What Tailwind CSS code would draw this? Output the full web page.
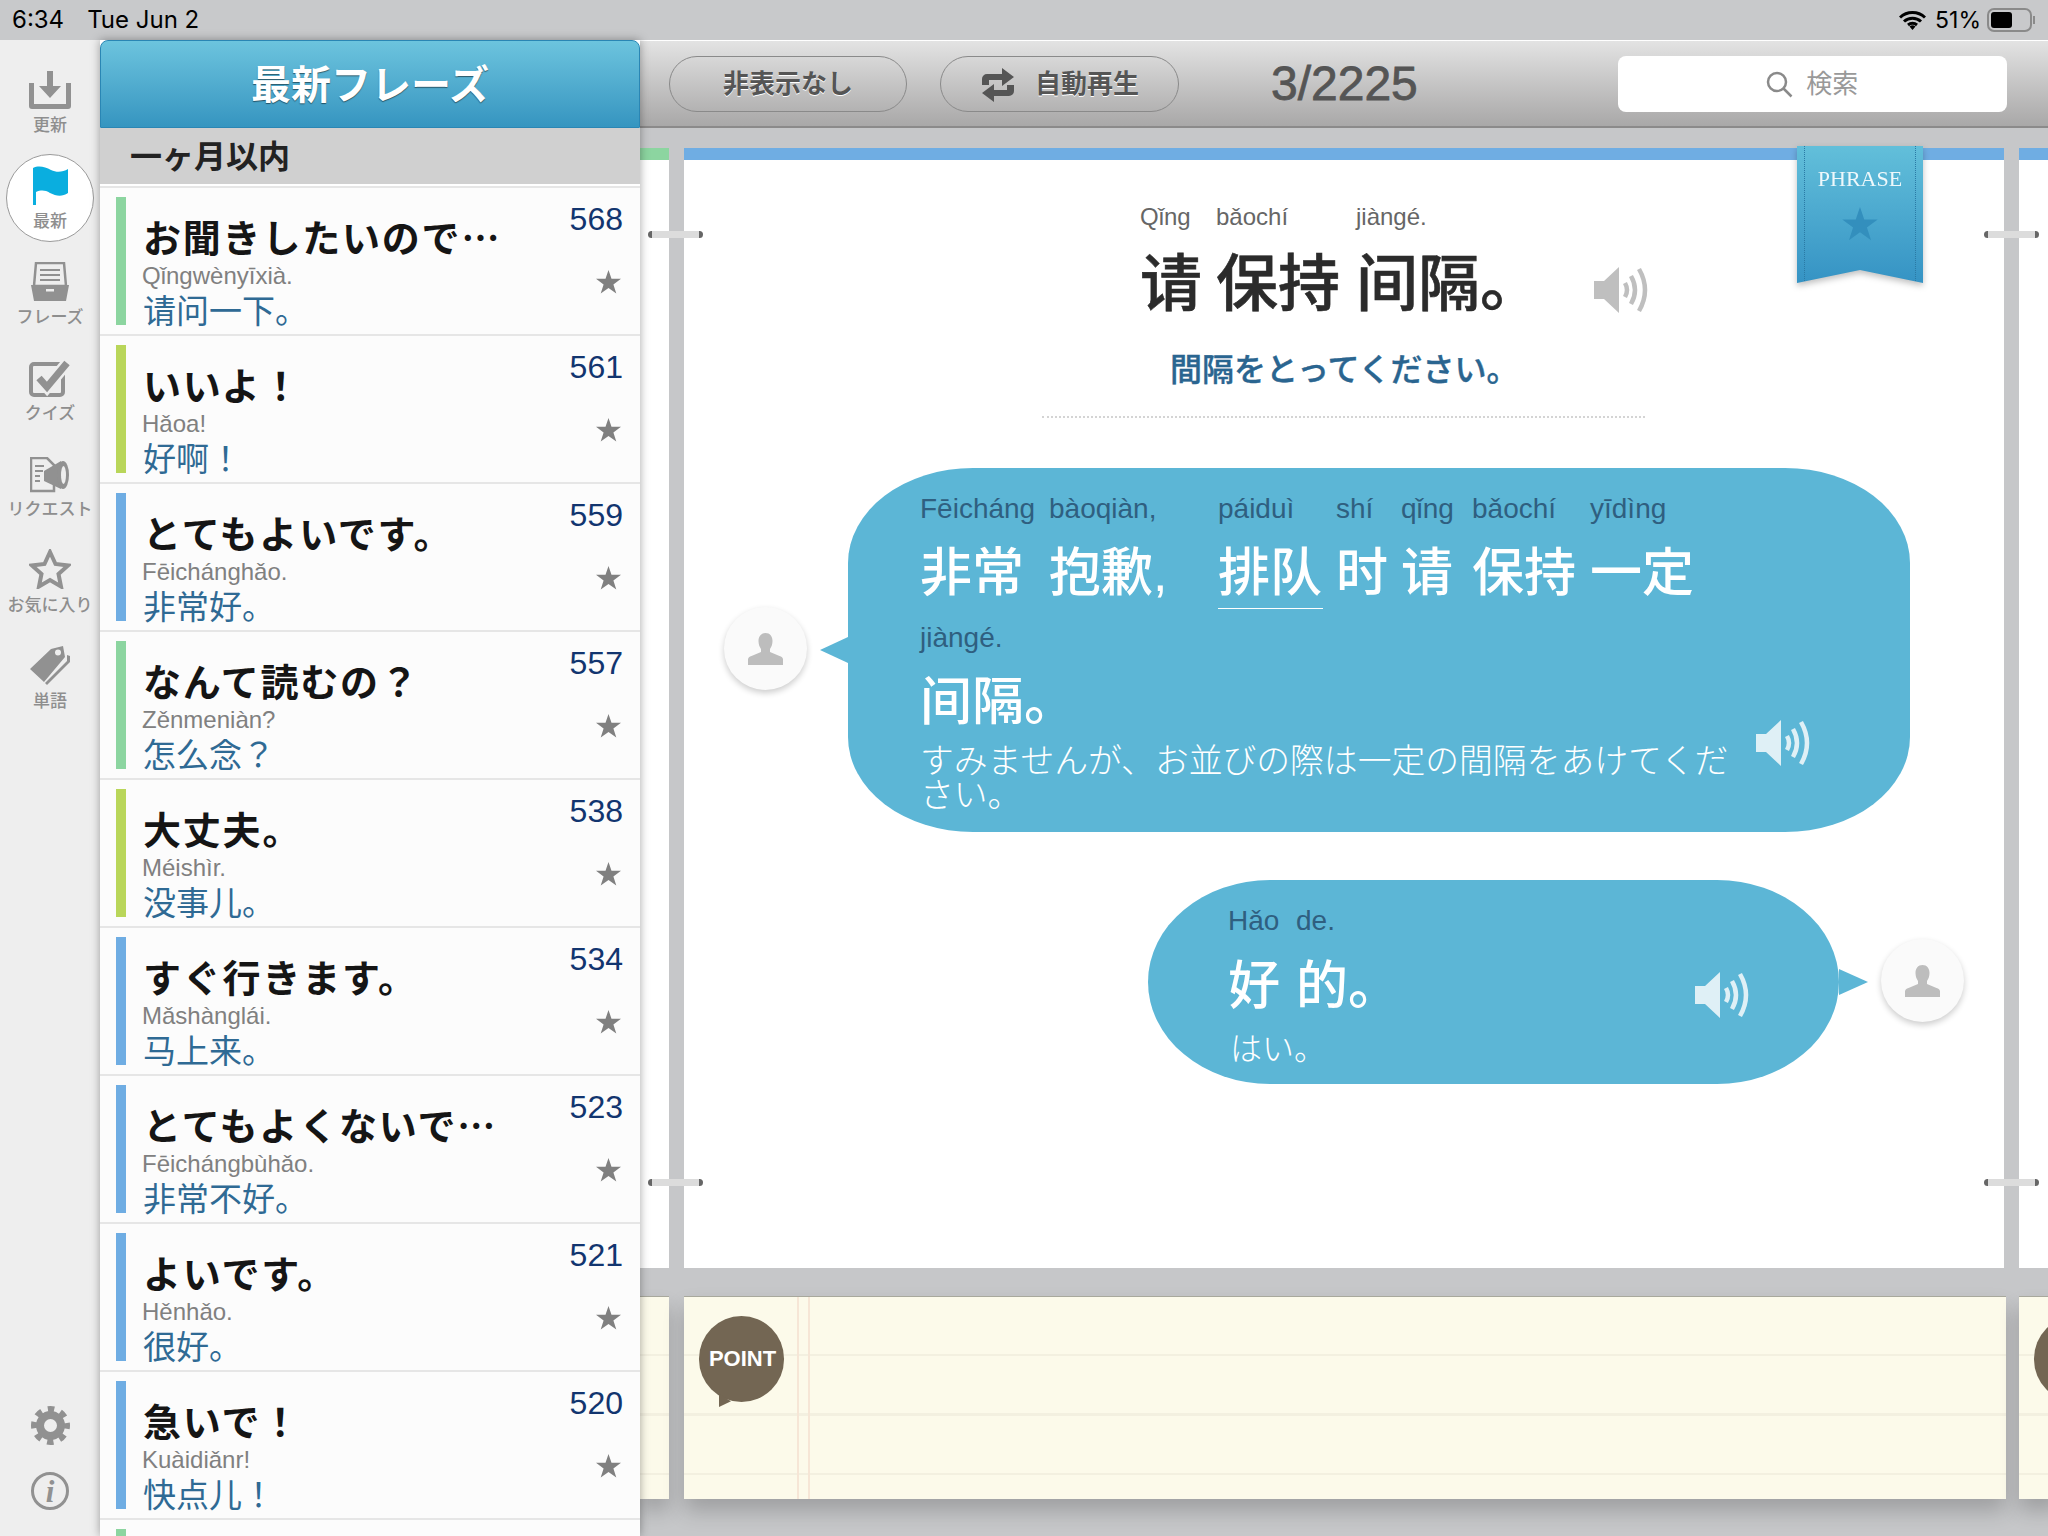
<!DOCTYPE html>
<html lang="ja">
  <head>
    <meta charset="UTF-8" />
    <title>最新フレーズ</title>
    <script src="https://cdn.jsdelivr.net/npm/@tailwindcss/browser@4"></script>
  </head>
  <body class="bg-[#c6c7c9] font-['Liberation_Sans','Noto_Sans_CJK_JP',sans-serif]">
    <svg class="hidden">
      <symbol id="speaker" viewBox="0 0 56 48">
        <path d="M0 15h10L25 1v46L10 33H0z" fill="currentColor" />
        <path d="M31 17q4 7 0 14M37 10q8 14 0 28M45 3q12 21 0 42" fill="none" stroke="currentColor" stroke-width="4.5" />
      </symbol>
      <symbol id="person" viewBox="0 0 35 32">
        <path d="M17.500 0c4.500 0 7 3.500 7 8 0 3-1 6-2.500 8v3l9.500 4c2 .8 3.500 1.600 3.500 3.500V32H0v-5.500C0 24.600 1.500 23.800 3.500 23l9.500-4v-3c-1.500-2-2.500-5-2.500-8 0-4.500 2.500-8 7-8z" fill="#bdbdbd" />
      </symbol>
      <symbol id="fav" viewBox="0 0 25 24">
        <path d="M12.500 0l3 8.800h9.500l-7.600 5.600 2.900 9.100-7.800-5.600-7.800 5.600 2.900-9.100L0 8.800h9.500z" fill="#808080" />
      </symbol>
    </svg>

    <div class="w-[2048px] h-[1536px] flex flex-col overflow-hidden">
      <!-- status bar -->
      <div class="h-[40px] bg-[#c8c9cb] flex items-center pl-[12px] pr-[13px] text-[24px] text-black font-['Inter','Liberation_Sans',sans-serif] shrink-0">
        <span>6:34</span>
        <span class="ml-[23px]">Tue Jun 2</span>
        <svg class="ml-auto w-[27px] h-[20px]" viewBox="0 0 27 20">
          <path d="M1 7.500a18 18 0 0 1 25 0M5 11.500a12.500 12.500 0 0 1 17 0M9 15a7 7 0 0 1 9 0" fill="none" stroke="black" stroke-width="3" />
          <path d="M10.500 16.500a4.500 4.500 0 0 1 6 0l-3 3.500z" />
        </svg>
        <span class="ml-[9px] text-[23px]">51%</span>
        <div class="ml-[6px] w-[45px] h-[24px] rounded-[7px] border-2 border-[#8a8a8a] p-[2px]">
          <div class="w-[21px] h-full bg-black rounded-[3px]"></div>
        </div>
        <div class="w-[2px] h-[8px] bg-[#8a8a8a] ml-[1px]"></div>
      </div>

      <div class="flex flex-1 min-h-0">
        <!-- side nav -->
        <nav class="w-[100px] shrink-0 bg-[#eeeeee] flex flex-col pt-[18px] pb-[26px] text-[#8e8e8e] text-[17px] font-medium leading-[20px] text-center">
          <div class="h-[96px] flex flex-col items-center">
            <div class="h-[58px] flex items-end pb-[7px]">
              <svg class="w-[42px] h-[38px]" viewBox="0 0 42 38" fill="#919191"><path d="M18 0h6v15h8L21 27 10 15h8z" /><path d="M0 12h5v21h32V12h5v23a3 3 0 0 1-3 3H3a3 3 0 0 1-3-3z" /></svg>
            </div>
            <span>更新</span>
          </div>
          <div class="h-[96px] flex flex-col items-center relative">
            <div class="absolute top-0 left-[6px] w-[88px] h-[88px] rounded-full bg-white border border-[#9a9a9a]"></div>
            <div class="h-[58px] flex items-end pb-[7px] relative">
              <svg class="w-[35px] h-[39px]" viewBox="0 0 35 39" fill="#0aaedf"><path d="M0 2c6-3 12-1 18 2s12 2 17-1v24c-6 4-12 3-18 0-5-3-9-3-14-1v13H0z" /></svg>
            </div>
            <span class="relative">最新</span>
          </div>
          <div class="h-[96px] flex flex-col items-center">
            <div class="h-[58px] flex items-end pb-[7px]">
              <svg class="w-[38px] h-[39px]" viewBox="0 0 38 39" fill="#919191"><path d="M5 1h28l2 23H3z" fill="none" stroke="#919191" stroke-width="2.500" /><path d="M9 7h20v2H9zM9 12h20v2H9zM9 17h20v2H9z" /><path d="M0 23h38l-3 16H3z" /><path d="M15 27h8v2.500h-8z" fill="#eeeeee" /></svg>
            </div>
            <span>フレーズ</span>
          </div>
          <div class="h-[96px] flex flex-col items-center">
            <div class="h-[58px] flex items-end pb-[7px]">
              <svg class="w-[42px] h-[37px]" viewBox="0 0 42 37" fill="none"><rect x="2" y="4" width="32" height="31" rx="3" stroke="#919191" stroke-width="4" /><path d="M10 18l8 9L38 3" stroke="#eeeeee" stroke-width="12" /><path d="M10 18l8 9L38 3" stroke="#919191" stroke-width="7" /></svg>
            </div>
            <span>クイズ</span>
          </div>
          <div class="h-[96px] flex flex-col items-center">
            <div class="h-[58px] flex items-end pb-[7px]">
              <svg class="w-[40px] h-[36px]" viewBox="0 0 40 36" fill="#919191"><path d="M1 1h16l7 7v26H1z" fill="none" stroke="#919191" stroke-width="2.500" /><path d="M5 8h9v2H5zM5 13h8v2H5zM5 18h5v2H5zM5 23h5v2H5z" /><path d="M14 14L31 4v28L14 24z" /><ellipse cx="33" cy="18" rx="6" ry="14" /><ellipse cx="33.500" cy="18" rx="2.500" ry="9" fill="#eeeeee" /></svg>
            </div>
            <span>リクエスト</span>
          </div>
          <div class="h-[96px] flex flex-col items-center">
            <div class="h-[58px] flex items-end pb-[7px]">
              <svg class="w-[42px] h-[40px]" viewBox="0 0 42 40"><path d="M21 3l5.500 12L39 16.500l-9.500 8.500L32 37.500l-11-6.500-11 6.500L12.500 25 3 16.500 15.500 15z" fill="none" stroke="#919191" stroke-width="4" /></svg>
            </div>
            <span>お気に入り</span>
          </div>
          <div class="h-[96px] flex flex-col items-center">
            <div class="h-[58px] flex items-end pb-[7px]">
              <svg class="w-[40px] h-[39px]" viewBox="0 0 40 39" fill="#919191"><path fill-rule="evenodd" d="M0 23L21 3 33 0l2 11-21 25zM28 3.500a3 3 0 1 0 0 6 3 3 0 0 0 0-6z" /><path d="M37 9l3 1v6L17 39l-2-2 22-22z" /></svg>
            </div>
            <span>単語</span>
          </div>
          <div class="mt-auto flex flex-col items-center gap-[27px]">
            <svg class="w-[39px] h-[39px]" viewBox="0 0 39 39" fill="none" stroke="#919191"><circle cx="19.500" cy="19.500" r="10.500" stroke-width="8" /><circle cx="19.500" cy="19.500" r="16.500" stroke-width="6" stroke-dasharray="6.500 6.460" stroke-dashoffset="3.200" /></svg>
            <div class="w-[38px] h-[38px] rounded-full border-[3px] border-[#919191] flex items-center justify-center text-[#919191] text-[31px] leading-none font-bold italic font-['Liberation_Serif',serif]">i</div>
          </div>
        </nav>

        <!-- phrase list -->
        <aside class="w-[540px] shrink-0 bg-white z-10 shadow-[0_0_9px_rgba(0,0,0,0.35)] flex flex-col overflow-hidden">
          <div class="h-[88px] shrink-0 pt-[2px] rounded-t-[8px] border-t border-x border-[#2a86b4] border-b bg-gradient-to-b from-[#6cc4de] to-[#3595c0] flex items-center justify-center text-white text-[40px] font-bold [text-shadow:0_1px_1px_rgba(0,0,0,0.5)]">最新フレーズ</div>
          <div class="h-[56px] shrink-0 pt-[2px] bg-[#d0d0d0] flex items-center pl-[30px] text-[32px] font-bold leading-none text-[#222]">一ヶ月以内</div>
          <div class="h-[4px] shrink-0 border-b-2 border-[#e6e6e6]"></div>

          <div class="h-[148px] shrink-0 flex pl-[16px] pt-[9px] pr-[17px] bg-[#fcfcfc] border-b-2 border-[#e6e6e6]">
            <div class="w-[10px] h-[128px] bg-[#8cd5a0] shrink-0"></div>
            <div class="ml-[17px] pt-[21px]">
              <p class="text-[38px] leading-[36px] mb-[8px] font-bold tracking-[1.800px] text-[#151515] font-['Noto_Sans_CJK_JP',sans-serif]">お聞きしたいので…</p>
              <p class="ml-[-1px] text-[24px] leading-[28px] text-[#808080]">Qǐngwènyīxià.</p>
              <p class="mt-[2px] text-[33px] leading-[40px] text-[#2f6a94] font-['Liberation_Sans','Noto_Sans_CJK_SC',sans-serif]">请问一下。</p>
            </div>
            <div class="ml-auto flex flex-col items-end pt-[5px]">
              <span class="text-[32px] leading-[34px] text-[#12356f]">568</span>
              <svg class="w-[25px] h-[24px] mt-[34px] mr-[2px]"><use href="#fav" /></svg>
            </div>
          </div>
          <div class="h-[148px] shrink-0 flex pl-[16px] pt-[9px] pr-[17px] bg-[#fcfcfc] border-b-2 border-[#e6e6e6]">
            <div class="w-[10px] h-[128px] bg-[#b9d65a] shrink-0"></div>
            <div class="ml-[17px] pt-[21px]">
              <p class="text-[38px] leading-[36px] mb-[8px] font-bold tracking-[1.800px] text-[#151515] font-['Noto_Sans_CJK_JP',sans-serif]">いいよ！</p>
              <p class="ml-[-1px] text-[24px] leading-[28px] text-[#808080]">Hǎoa!</p>
              <p class="mt-[2px] text-[33px] leading-[40px] text-[#2f6a94] font-['Liberation_Sans','Noto_Sans_CJK_SC',sans-serif]">好啊！</p>
            </div>
            <div class="ml-auto flex flex-col items-end pt-[5px]">
              <span class="text-[32px] leading-[34px] text-[#12356f]">561</span>
              <svg class="w-[25px] h-[24px] mt-[34px] mr-[2px]"><use href="#fav" /></svg>
            </div>
          </div>
          <div class="h-[148px] shrink-0 flex pl-[16px] pt-[9px] pr-[17px] bg-[#fcfcfc] border-b-2 border-[#e6e6e6]">
            <div class="w-[10px] h-[128px] bg-[#6fade3] shrink-0"></div>
            <div class="ml-[17px] pt-[21px]">
              <p class="text-[38px] leading-[36px] mb-[8px] font-bold tracking-[1.800px] text-[#151515] font-['Noto_Sans_CJK_JP',sans-serif]">とてもよいです。</p>
              <p class="ml-[-1px] text-[24px] leading-[28px] text-[#808080]">Fēichánghǎo.</p>
              <p class="mt-[2px] text-[33px] leading-[40px] text-[#2f6a94] font-['Liberation_Sans','Noto_Sans_CJK_SC',sans-serif]">非常好。</p>
            </div>
            <div class="ml-auto flex flex-col items-end pt-[5px]">
              <span class="text-[32px] leading-[34px] text-[#12356f]">559</span>
              <svg class="w-[25px] h-[24px] mt-[34px] mr-[2px]"><use href="#fav" /></svg>
            </div>
          </div>
          <div class="h-[148px] shrink-0 flex pl-[16px] pt-[9px] pr-[17px] bg-[#fcfcfc] border-b-2 border-[#e6e6e6]">
            <div class="w-[10px] h-[128px] bg-[#8cd5a0] shrink-0"></div>
            <div class="ml-[17px] pt-[21px]">
              <p class="text-[38px] leading-[36px] mb-[8px] font-bold tracking-[1.800px] text-[#151515] font-['Noto_Sans_CJK_JP',sans-serif]">なんて読むの？</p>
              <p class="ml-[-1px] text-[24px] leading-[28px] text-[#808080]">Zěnmeniàn?</p>
              <p class="mt-[2px] text-[33px] leading-[40px] text-[#2f6a94] font-['Liberation_Sans','Noto_Sans_CJK_SC',sans-serif]">怎么念？</p>
            </div>
            <div class="ml-auto flex flex-col items-end pt-[5px]">
              <span class="text-[32px] leading-[34px] text-[#12356f]">557</span>
              <svg class="w-[25px] h-[24px] mt-[34px] mr-[2px]"><use href="#fav" /></svg>
            </div>
          </div>
          <div class="h-[148px] shrink-0 flex pl-[16px] pt-[9px] pr-[17px] bg-[#fcfcfc] border-b-2 border-[#e6e6e6]">
            <div class="w-[10px] h-[128px] bg-[#b9d65a] shrink-0"></div>
            <div class="ml-[17px] pt-[21px]">
              <p class="text-[38px] leading-[36px] mb-[8px] font-bold tracking-[1.800px] text-[#151515] font-['Noto_Sans_CJK_JP',sans-serif]">大丈夫。</p>
              <p class="ml-[-1px] text-[24px] leading-[28px] text-[#808080]">Méishìr.</p>
              <p class="mt-[2px] text-[33px] leading-[40px] text-[#2f6a94] font-['Liberation_Sans','Noto_Sans_CJK_SC',sans-serif]">没事儿。</p>
            </div>
            <div class="ml-auto flex flex-col items-end pt-[5px]">
              <span class="text-[32px] leading-[34px] text-[#12356f]">538</span>
              <svg class="w-[25px] h-[24px] mt-[34px] mr-[2px]"><use href="#fav" /></svg>
            </div>
          </div>
          <div class="h-[148px] shrink-0 flex pl-[16px] pt-[9px] pr-[17px] bg-[#fcfcfc] border-b-2 border-[#e6e6e6]">
            <div class="w-[10px] h-[128px] bg-[#6fade3] shrink-0"></div>
            <div class="ml-[17px] pt-[21px]">
              <p class="text-[38px] leading-[36px] mb-[8px] font-bold tracking-[1.800px] text-[#151515] font-['Noto_Sans_CJK_JP',sans-serif]">すぐ行きます。</p>
              <p class="ml-[-1px] text-[24px] leading-[28px] text-[#808080]">Mǎshànglái.</p>
              <p class="mt-[2px] text-[33px] leading-[40px] text-[#2f6a94] font-['Liberation_Sans','Noto_Sans_CJK_SC',sans-serif]">马上来。</p>
            </div>
            <div class="ml-auto flex flex-col items-end pt-[5px]">
              <span class="text-[32px] leading-[34px] text-[#12356f]">534</span>
              <svg class="w-[25px] h-[24px] mt-[34px] mr-[2px]"><use href="#fav" /></svg>
            </div>
          </div>
          <div class="h-[148px] shrink-0 flex pl-[16px] pt-[9px] pr-[17px] bg-[#fcfcfc] border-b-2 border-[#e6e6e6]">
            <div class="w-[10px] h-[128px] bg-[#6fade3] shrink-0"></div>
            <div class="ml-[17px] pt-[21px]">
              <p class="text-[38px] leading-[36px] mb-[8px] font-bold tracking-[1.800px] text-[#151515] font-['Noto_Sans_CJK_JP',sans-serif]">とてもよくないで…</p>
              <p class="ml-[-1px] text-[24px] leading-[28px] text-[#808080]">Fēichángbùhǎo.</p>
              <p class="mt-[2px] text-[33px] leading-[40px] text-[#2f6a94] font-['Liberation_Sans','Noto_Sans_CJK_SC',sans-serif]">非常不好。</p>
            </div>
            <div class="ml-auto flex flex-col items-end pt-[5px]">
              <span class="text-[32px] leading-[34px] text-[#12356f]">523</span>
              <svg class="w-[25px] h-[24px] mt-[34px] mr-[2px]"><use href="#fav" /></svg>
            </div>
          </div>
          <div class="h-[148px] shrink-0 flex pl-[16px] pt-[9px] pr-[17px] bg-[#fcfcfc] border-b-2 border-[#e6e6e6]">
            <div class="w-[10px] h-[128px] bg-[#6fade3] shrink-0"></div>
            <div class="ml-[17px] pt-[21px]">
              <p class="text-[38px] leading-[36px] mb-[8px] font-bold tracking-[1.800px] text-[#151515] font-['Noto_Sans_CJK_JP',sans-serif]">よいです。</p>
              <p class="ml-[-1px] text-[24px] leading-[28px] text-[#808080]">Hěnhǎo.</p>
              <p class="mt-[2px] text-[33px] leading-[40px] text-[#2f6a94] font-['Liberation_Sans','Noto_Sans_CJK_SC',sans-serif]">很好。</p>
            </div>
            <div class="ml-auto flex flex-col items-end pt-[5px]">
              <span class="text-[32px] leading-[34px] text-[#12356f]">521</span>
              <svg class="w-[25px] h-[24px] mt-[34px] mr-[2px]"><use href="#fav" /></svg>
            </div>
          </div>
          <div class="h-[148px] shrink-0 flex pl-[16px] pt-[9px] pr-[17px] bg-[#fcfcfc] border-b-2 border-[#e6e6e6]">
            <div class="w-[10px] h-[128px] bg-[#6fade3] shrink-0"></div>
            <div class="ml-[17px] pt-[21px]">
              <p class="text-[38px] leading-[36px] mb-[8px] font-bold tracking-[1.800px] text-[#151515] font-['Noto_Sans_CJK_JP',sans-serif]">急いで！</p>
              <p class="ml-[-1px] text-[24px] leading-[28px] text-[#808080]">Kuàidiǎnr!</p>
              <p class="mt-[2px] text-[33px] leading-[40px] text-[#2f6a94] font-['Liberation_Sans','Noto_Sans_CJK_SC',sans-serif]">快点儿！</p>
            </div>
            <div class="ml-auto flex flex-col items-end pt-[5px]">
              <span class="text-[32px] leading-[34px] text-[#12356f]">520</span>
              <svg class="w-[25px] h-[24px] mt-[34px] mr-[2px]"><use href="#fav" /></svg>
            </div>
          </div>
          <div class="h-[148px] shrink-0 flex pl-[16px] pt-[9px] bg-[#fcfcfc]">
            <div class="w-[10px] h-[128px] bg-[#8cd5a0] shrink-0"></div>
          </div>
        </aside>

        <main class="flex-1 min-w-0 flex flex-col">
          <!-- toolbar -->
          <div class="h-[88px] shrink-0 border-t border-white border-b-2 border-b-[#8b8a8a] bg-gradient-to-b from-[#e3e3e3] to-[#a9a8a8] flex items-center pl-[29px] text-[#555]">
            <div class="w-[238px] h-[56px] pt-[2px] rounded-full border border-[#8a8a8a] flex items-center justify-center text-[26px] font-bold [text-shadow:0_1px_0_#ffffff]">非表示なし</div>
            <div class="ml-[33px] w-[239px] h-[56px] pt-[2px] rounded-full border border-[#8a8a8a] flex items-center pl-[40px] text-[26px] font-bold [text-shadow:0_1px_0_#ffffff]">
              <svg class="w-[34px] h-[34px]" viewBox="0 0 34 34" fill="#555"><path d="M1 17v-6a5 5 0 0 1 5-5h15V0l12 9-12 9v-6H8v5z" /><path d="M33 17v6a5 5 0 0 1-5 5H13v6L1 25l12-9v6h13v-5z" /></svg>
              <span class="ml-[20px]">自動再生</span>
            </div>
            <span class="ml-[92px] text-[48px] [-webkit-text-stroke:0.8px_#555] font-['Liberation_Sans',sans-serif]">3/2225</span>
            <div class="ml-[200px] w-[389px] h-[56px] pt-[2px] rounded-[8px] bg-white flex items-center justify-center text-[26px] text-[#999]">
              <svg class="w-[27px] h-[27px]" viewBox="0 0 27 27" fill="none" stroke="#8a8a8a" stroke-width="2.500"><circle cx="11" cy="11" r="9" /><path d="M17.500 17.500l8 8" /></svg>
              <span class="ml-[13px]">検索</span>
            </div>
          </div>

          <!-- pages -->
          <div class="flex-1 min-h-0 flex gap-x-[15px] pt-[20px] overflow-hidden">
            <div class="w-[29px] shrink-0 flex flex-col">
              <div class="h-[1120px] bg-white border-t-[12px] border-[#8cd5a0]"></div>
              <div class="h-[203px] mt-[28px] bg-[#fcfaea] border-t border-[#a8a89c] bg-[repeating-linear-gradient(to_bottom,transparent_0,transparent_57px,#f3f0e0_57px,#f3f0e0_59.500px)] shadow-[0_12px_20px_rgba(0,0,0,0.2)]"></div>
            </div>

            <div class="w-[1320px] shrink-0 flex flex-col relative">
              <div class="h-[1120px] bg-white border-t-[12px] border-[#6fade3] relative flex flex-col">
                <!-- ribbon -->
                <div class="absolute left-[1113px] top-[-14px] z-10 w-[126px] h-[137px] drop-shadow-[0_3px_3px_rgba(0,0,0,0.25)]">
                  <div class="h-full [clip-path:polygon(0_0,100%_0,100%_100%,50%_90.500%,0_100%)] bg-gradient-to-b from-[#62bfda] to-[#3593c4] flex flex-col items-center pt-[21px] relative">
                    <div class="absolute inset-y-0 inset-x-[7px] border-x border-dotted border-[#2a7aa5]"></div>
                    <span class="text-[22px] leading-[24px] text-[#eef8fb] font-['Liberation_Serif',serif]">PHRASE</span>
                    <svg class="w-[36px] h-[34px] mt-[16px]" viewBox="0 0 25 24"><path d="M12.500 0l3 8.800h9.500l-7.600 5.600 2.900 9.100-7.800-5.600-7.800 5.600 2.900-9.100L0 8.800h9.500z" fill="#338fbd" /></svg>
                  </div>
                </div>

                <!-- phrase -->
                <div class="flex pl-[456px] pt-[42px] text-[#2b2b2b] font-['Liberation_Sans','Noto_Sans_CJK_SC',sans-serif]">
                  <div class="w-[76px]">
                    <p class="text-[24px] leading-[30px] text-[#666]">Qǐng</p>
                    <p class="mt-[15px] text-[62px] leading-[76px] font-medium [-webkit-text-stroke:0.6px_#2b2b2b]">请</p>
                  </div>
                  <div class="w-[140px]">
                    <p class="text-[24px] leading-[30px] text-[#666]">bǎochí</p>
                    <p class="mt-[15px] text-[62px] leading-[76px] font-medium [-webkit-text-stroke:0.6px_#2b2b2b]">保持</p>
                  </div>
                  <div class="w-[238px]">
                    <p class="text-[24px] leading-[30px] text-[#666]">jiàngé.</p>
                    <p class="mt-[15px] text-[62px] leading-[76px] font-medium [-webkit-text-stroke:0.6px_#2b2b2b]">间隔。</p>
                  </div>
                  <svg class="w-[56px] h-[48px] mt-[64px] text-[#bfbfbf]"><use href="#speaker" /></svg>
                </div>
                <p class="mt-[27px] pl-[486px] text-[32px] leading-[40px] font-medium text-[#2a6590] [-webkit-text-stroke:0.4px_#2a6590]">間隔をとってください。</p>
                <div class="mt-[26px] ml-[358px] w-[603px] border-t-2 border-dotted border-[#d4d4d4]"></div>

                <!-- first bubble -->
                <div class="relative mt-[50px] ml-[164px] w-[1062px] h-[364px] rounded-[125px/95px] bg-[#5cb6d6] pl-[72px] pt-[23px] text-white">
                  <div class="absolute left-[-28px] top-[169px] w-[28px] h-[26px] bg-[#5cb6d6] [clip-path:polygon(100%_0,0_50%,100%_100%)]"></div>
                  <div class="absolute left-[-124px] top-[139px] w-[83px] h-[83px] rounded-full bg-[#fafafa] shadow-[0_3px_6px_rgba(0,0,0,0.2)] flex items-center justify-center">
                    <svg class="w-[35px] h-[32px]"><use href="#person" /></svg>
                  </div>
                  <div class="flex font-['Liberation_Sans','Noto_Sans_CJK_SC',sans-serif]">
                    <div class="w-[129px]"><p class="text-[28px] leading-[36px] text-[#2f5f80]">Fēicháng</p><p class="mt-[11px] text-[52px] leading-[70px] font-medium">非常</p></div>
                    <div class="w-[169px]"><p class="text-[28px] leading-[36px] text-[#2f5f80]">bàoqiàn,</p><p class="mt-[11px] text-[52px] leading-[70px] font-medium">抱歉,</p></div>
                    <div class="w-[118px]"><p class="text-[28px] leading-[36px] text-[#2f5f80]">páiduì</p><p class="mt-[11px] w-[105px] text-[52px] leading-[70px] font-medium border-b border-white">排队</p></div>
                    <div class="w-[65px]"><p class="text-[28px] leading-[36px] text-[#2f5f80]">shí</p><p class="mt-[11px] text-[52px] leading-[70px] font-medium">时</p></div>
                    <div class="w-[71px]"><p class="text-[28px] leading-[36px] text-[#2f5f80]">qǐng</p><p class="mt-[11px] text-[52px] leading-[70px] font-medium">请</p></div>
                    <div class="w-[118px]"><p class="text-[28px] leading-[36px] text-[#2f5f80]">bǎochí</p><p class="mt-[11px] text-[52px] leading-[70px] font-medium">保持</p></div>
                    <div class="w-[110px]"><p class="text-[28px] leading-[36px] text-[#2f5f80]">yīdìng</p><p class="mt-[11px] text-[52px] leading-[70px] font-medium">一定</p></div>
                  </div>
                  <div class="mt-[11px] font-['Liberation_Sans','Noto_Sans_CJK_SC',sans-serif]">
                    <p class="text-[28px] leading-[36px] text-[#2f5f80]">jiàngé.</p>
                    <p class="mt-[11px] text-[52px] leading-[70px] font-medium">间隔。</p>
                  </div>
                  <div class="flex items-start mt-[7px]">
                    <p class="w-[815px] text-[33.800px] leading-[34px] font-light">すみませんが、お並びの際は一定の間隔をあけてください。</p>
                    <svg class="w-[56px] h-[48px] ml-[21px] mt-[-25px] text-[#dff0f6]"><use href="#speaker" /></svg>
                  </div>
                </div>

                <!-- second bubble -->
                <div class="relative mt-[48px] ml-[464px] w-[691px] h-[204px] rounded-[122px/102px] bg-[#5cb6d6] pl-[80px] pt-[23px] text-white">
                  <div class="absolute right-[-29px] top-[89px] w-[29px] h-[26px] bg-[#5cb6d6] [clip-path:polygon(0_0,100%_50%,0_100%)]"></div>
                  <div class="absolute right-[-125px] top-[59px] w-[83px] h-[83px] rounded-full bg-[#fafafa] shadow-[0_3px_6px_rgba(0,0,0,0.2)] flex items-center justify-center">
                    <svg class="w-[35px] h-[32px]"><use href="#person" /></svg>
                  </div>
                  <div class="flex font-['Liberation_Sans','Noto_Sans_CJK_SC',sans-serif]">
                    <div class="w-[68px]"><p class="text-[28px] leading-[36px] text-[#2f5f80]">Hǎo</p><p class="mt-[12px] text-[52px] leading-[70px] font-medium">好</p></div>
                    <div class="w-[399px]"><p class="text-[28px] leading-[36px] text-[#2f5f80]">de.</p><p class="mt-[12px] text-[52px] leading-[70px] font-medium">的。</p></div>
                    <svg class="w-[56px] h-[48px] mt-[68px] text-[#dff0f6]"><use href="#speaker" /></svg>
                  </div>
                  <p class="mt-[9px] pl-[2px] text-[32px] leading-[38px] font-light">はい。</p>
                </div>
              </div>

              <!-- note -->
              <div class="h-[203px] w-[1322px] mt-[28px] relative bg-[#fcfaea] border-t border-[#a8a89c] bg-[repeating-linear-gradient(to_bottom,transparent_0,transparent_57px,#f3f0e0_57px,#f3f0e0_59.500px)] shadow-[0_12px_20px_rgba(0,0,0,0.2)]">
                <div class="absolute inset-y-0 left-[113px] w-[2px] bg-[#f6e6d6]"></div>
                <div class="absolute inset-y-0 left-[124px] w-[2px] bg-[#f6e6d6]"></div>
                <div class="absolute left-[15px] top-[19px] w-[85px] h-[86px] pl-[2px] pb-[2px] rounded-full bg-[#736653] flex items-center justify-center text-white text-[22px] font-bold">POINT</div>
                <div class="absolute left-[35px] top-[97px] w-[12px] h-[13px] bg-[#736653] [clip-path:polygon(0_0,100%_55%,0_100%)]"></div>
              </div>

              <!-- binder rings -->
              <div class="absolute left-[-36px] top-[83px] w-[55px] h-[7px] rounded-full bg-[#dcdcdc] border-x-[4px] border-[#666]"></div>
              <div class="absolute left-[-36px] top-[1031px] w-[55px] h-[7px] rounded-full bg-[#dcdcdc] border-x-[4px] border-[#666]"></div>
              <div class="absolute left-[1300px] top-[83px] w-[55px] h-[7px] rounded-full bg-[#dcdcdc] border-x-[4px] border-[#666]"></div>
              <div class="absolute left-[1300px] top-[1031px] w-[55px] h-[7px] rounded-full bg-[#dcdcdc] border-x-[4px] border-[#666]"></div>
            </div>

            <div class="w-[40px] shrink-0 flex flex-col">
              <div class="h-[1120px] bg-white border-t-[12px] border-[#6fade3]"></div>
              <div class="h-[203px] mt-[28px] relative bg-[#fcfaea] border-t border-[#a8a89c] bg-[repeating-linear-gradient(to_bottom,transparent_0,transparent_57px,#f3f0e0_57px,#f3f0e0_59.500px)] shadow-[0_12px_20px_rgba(0,0,0,0.2)]">
                <div class="absolute left-[15px] top-[19px] w-[85px] h-[86px] rounded-full bg-[#736653]"></div>
              </div>
            </div>
          </div>
        </main>
      </div>
    </div>
  </body>
</html>
